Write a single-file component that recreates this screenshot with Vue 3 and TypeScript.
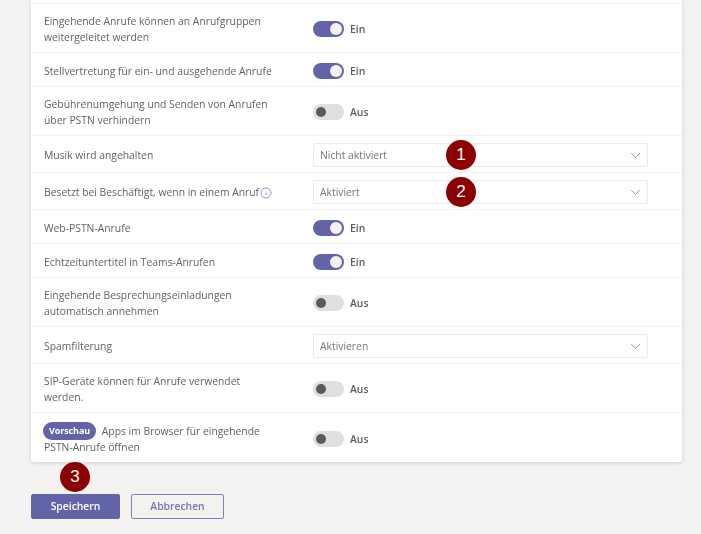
<template>
  <div class="page">
    <div class="card">
      <div v-for="row in rows" :key="row.label" class="row" :class="row.size">
        <div class="label">
          <span v-if="row.preview" class="preview">Vorschau</span>
          {{ row.label }}
          <svg v-if="row.info" class="info" viewBox="0 0 12 12" width="12" height="12">
            <circle cx="6" cy="6" r="5" fill="none" stroke="#8a88b5" stroke-width="0.9" />
            <path d="M6 5.4v3M6 3.5v.9" stroke="#8a88b5" stroke-width="0.9" fill="none" />
          </svg>
        </div>
        <div v-if="row.select" class="select">
          <span>{{ row.select }}</span>
          <svg viewBox="0 0 12 8" width="11" height="7">
            <path d="M1 1.2l5 5 5-5" fill="none" stroke="#8f8f8f" stroke-width="1" />
          </svg>
        </div>
        <div v-else class="toggle-wrap">
          <span class="toggle" :class="{ on: row.on }"><i></i></span>
          <span class="state">{{ row.on ? 'Ein' : 'Aus' }}</span>
        </div>
      </div>
      <span class="marker m1">1</span>
      <span class="marker m2">2</span>
    </div>
    <div class="actions">
      <span class="marker m3">3</span>
      <button class="btn primary">Speichern</button>
      <button class="btn">Abbrechen</button>
    </div>
  </div>
</template>

<script setup lang="ts">
interface SettingRow {
  label: string
  size: 'wide' | 'tall' | 'mid' | 'low'
  on?: boolean
  select?: string
  info?: boolean
  preview?: boolean
}

const rows: SettingRow[] = [
  { label: 'Eingehende Anrufe können an Anrufgruppen weitergeleitet werden', size: 'tall', on: true },
  { label: 'Stellvertretung für ein- und ausgehende Anrufe', size: 'low', on: true },
  { label: 'Gebührenumgehung und Senden von Anrufen über PSTN verhindern', size: 'tall', on: false },
  { label: 'Musik wird angehalten', size: 'mid', select: 'Nicht aktiviert' },
  { label: 'Besetzt bei Beschäftigt, wenn in einem Anruf', size: 'mid', select: 'Aktiviert', info: true },
  { label: 'Web-PSTN-Anrufe', size: 'low', on: true },
  { label: 'Echtzeituntertitel in Teams-Anrufen', size: 'low', on: true },
  { label: 'Eingehende Besprechungseinladungen automatisch annehmen', size: 'tall', on: false },
  { label: 'Spamfilterung', size: 'mid', select: 'Aktivieren' },
  { label: 'SIP-Geräte können für Anrufe verwendet werden.', size: 'tall', on: false },
  { label: 'Apps im Browser für eingehende PSTN-Anrufe öffnen', size: 'wide', on: false, preview: true }
]
</script>

<style>
html,
body {
  margin: 0;
  background: #f3f2f1;
  overflow: hidden;
}
</style>

<style scoped>
.page {
  height: 534px;
  padding: 0 19px 0 31px;
  box-sizing: border-box;
  font-family: 'Open Sans', 'Noto Sans', sans-serif;
  font-size: 10.35px;
  color: #616161;
  background: #f3f2f1;
  filter: blur(0.5px);
}

.card {
  position: relative;
  background: #fff;
  padding-top: 3px;
  border-radius: 0 0 3px 3px;
  box-shadow: 0 1px 4px rgba(0, 0, 0, 0.14);
}

.row {
  display: grid;
  grid-template-columns: 269px 335px;
  align-items: center;
  box-sizing: border-box;
  padding: 2px 0 0 13px;
  border-top: 1px solid #f2f1f0;
}

.row.wide {
  height: 50px;
}

.row.tall {
  height: 49px;
}

.row.mid {
  height: 37px;
}

.row.low {
  height: 34px;
}

.label {
  width: 235px;
  line-height: 16px;
}

.preview {
  display: inline-block;
  height: 18px;
  line-height: 18px;
  padding: 0 6px;
  margin: -2px 3px -2px -1px;
  border-radius: 9px;
  background: #6264a7;
  color: #fff;
  font-size: 9px;
  font-weight: 700;
  letter-spacing: -0.1px;
  vertical-align: 1px;
}

.info {
  margin-left: -2px;
  vertical-align: -3px;
}

.toggle-wrap {
  display: flex;
  align-items: center;
  gap: 6px;
}

.toggle {
  position: relative;
  width: 31px;
  height: 16px;
  border-radius: 8px;
  background: #e1dfdd;
}

.toggle i {
  position: absolute;
  top: 3px;
  left: 3px;
  width: 10px;
  height: 10px;
  border-radius: 50%;
  background: #5c5a58;
}

.toggle.on {
  background: #6264a7;
}

.toggle.on i {
  top: 2px;
  left: auto;
  right: 2px;
  width: 12px;
  height: 12px;
  background: #f3f2f1;
}

.state {
  color: #605e5c;
  font-weight: 600;
  font-size: 10.35px;
}

.select {
  display: flex;
  align-items: center;
  justify-content: space-between;
  box-sizing: border-box;
  height: 24.5px;
  padding: 0 6px 0 6px;
  border: 1px solid #eceae9;
  border-radius: 2px;
  color: #757575;
}

.marker {
  position: absolute;
  width: 30px;
  height: 30px;
  border-radius: 50%;
  background: #8b0000;
  color: #fff;
  font-size: 17px;
  font-family: 'Liberation Sans', sans-serif;
  line-height: 30px;
  text-align: center;
}

.m1 {
  left: 415px;
  top: 140px;
}

.m2 {
  left: 415px;
  top: 177px;
}

.m3 {
  left: 29px;
  top: -32px;
}

.actions {
  position: relative;
  display: flex;
  gap: 11px;
  margin-top: 31.5px;
}

.btn {
  width: 93px;
  height: 25px;
  padding: 0;
  border: 1px solid #8183b8;
  border-radius: 2px;
  background: transparent;
  color: #7577ae;
  font-family: inherit;
  font-size: 10.35px;
  font-weight: 600;
}

.btn.primary {
  width: 89px;
  border-color: #6264a7;
  background: #6264a7;
  color: #fff;
}
</style>
